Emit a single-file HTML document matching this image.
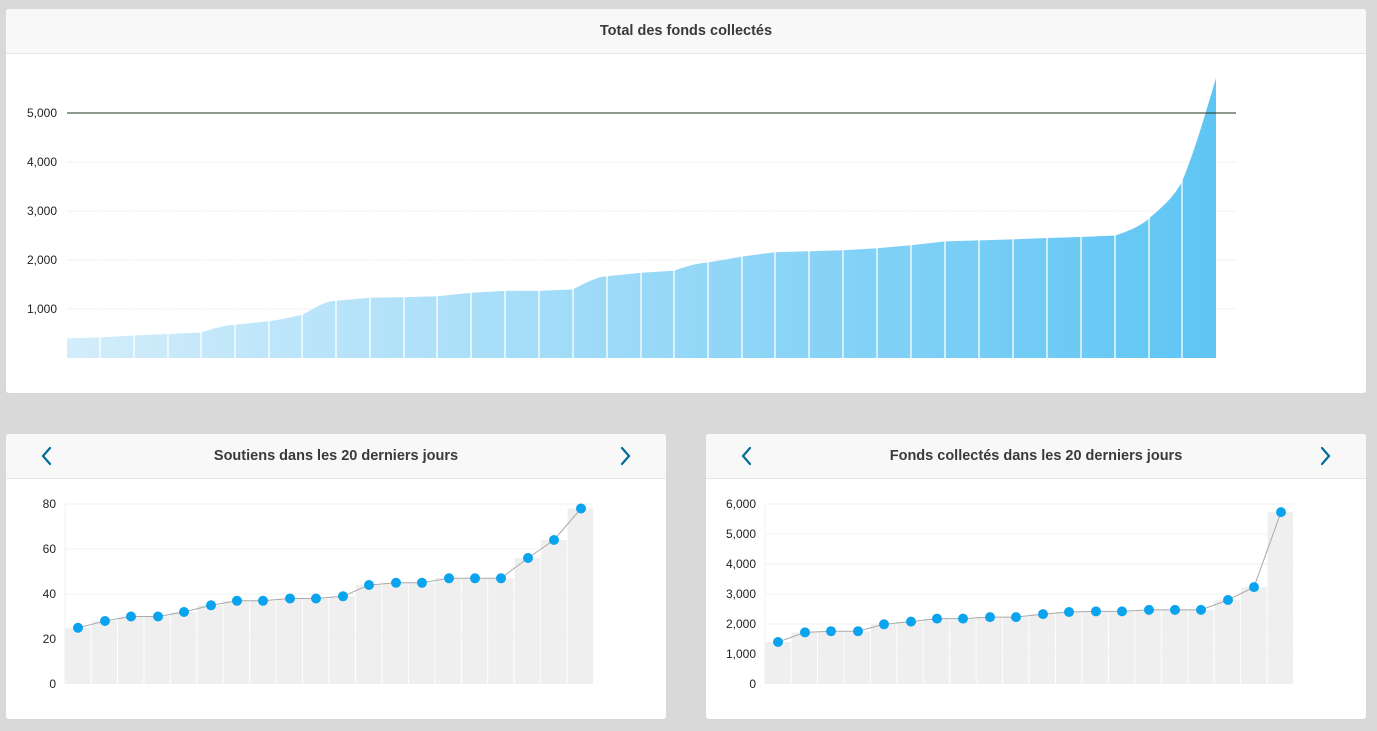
<!DOCTYPE html>
<html><head><meta charset="utf-8"><style>
body{margin:0;width:1377px;height:731px;background:#d9d9d9;font-family:"Liberation Sans",Arial,sans-serif;position:relative;overflow:hidden}
.p{position:absolute;background:#fff;border-radius:3px;overflow:hidden}
.h{height:44px;background:#f8f8f8;border-bottom:1px solid #e6e6e6;text-align:center;line-height:44px;font-weight:bold;font-size:14.5px;color:#3a3a3a}
svg{position:absolute;left:0;top:0}
text{font-family:"Liberation Sans",Arial,sans-serif;font-size:12px;fill:#222}
</style></head><body>
<div class="p" style="left:6px;top:9px;width:1360px;height:384px"><div class="h">Total des fonds collectés</div></div>
<div class="p" style="left:6px;top:434px;width:660px;height:285px"><div class="h">Soutiens dans les 20 derniers jours</div></div>
<div class="p" style="left:706px;top:434px;width:660px;height:285px"><div class="h">Fonds collectés dans les 20 derniers jours</div></div>
<svg width="1377" height="731">
<defs><linearGradient id="g" x1="0" x2="1" y1="0" y2="0"><stop offset="0" stop-color="#d3edfb"/><stop offset="1" stop-color="#5fc5f4"/></linearGradient></defs>
<g stroke="#f0f0f0"><line x1="67" x2="1236" y1="162" y2="162"/><line x1="67" x2="1236" y1="211" y2="211"/><line x1="67" x2="1236" y1="260" y2="260"/><line x1="67" x2="1236" y1="309" y2="309"/></g>
<path fill="url(#g)" d="M67,358 L67,338.4 L100,337.4 L134,335.5 L168,334 L201,332.5 C215,328 225,325 235,324.7 L269,321.3 C285,319 295,316 302,314.9 C315,308 325,301 336,300.7 L370,297.7 L404,297.2 L437,296.3 L471,292.8 L505,290.9 L539,290.9 L573,289.4 C590,280 600,276.5 607,276.2 L641,272.7 L674,270.8 C690,265 700,263 708,262.5 L742,256.6 L775,252.2 L809,251.2 L843,250.2 L877,248.2 L911,245.3 L945,241.4 L979,240.4 L1013,239.4 L1047,238 L1081,237 L1115,235.5 C1130,231 1142,225 1149,218.4 C1165,205 1175,195 1182,181.6 C1195,150 1205,115 1216,78 L1216,358 Z"/>
<g stroke="#fff" stroke-width="1.3"><path d="M100,200V358M134,200V358M168,200V358M201,200V358M235,200V358M269,200V358M302,200V358M336,200V358M370,200V358M404,200V358M437,200V358M471,200V358M505,200V358M539,200V358M573,200V358M607,200V358M641,200V358M674,200V358M708,200V358M742,200V358M775,200V358M809,200V358M843,200V358M877,200V358M911,200V358M945,200V358M979,200V358M1013,200V358M1047,200V358M1081,200V358M1115,200V358M1149,200V358M1182,150V358"/></g>
<line x1="67" x2="1236" y1="113" y2="113" stroke="#1c351c"/>
<g text-anchor="end"><text x="57" y="117">5,000</text><text x="57" y="166">4,000</text><text x="57" y="215">3,000</text><text x="57" y="264">2,000</text><text x="57" y="313">1,000</text></g>

<g stroke="#036b9a" stroke-width="2.2" fill="none" stroke-linecap="round"><path d="M50,448 L43,456 L50,464"/><path d="M622,448 L629,456 L622,464"/><path d="M750,448 L743,456 L750,464"/><path d="M1322,448 L1329,456 L1322,464"/></g>

<g stroke="#f2f2f2"><path d="M65,504H594M65,549H594M65,594H594M65,639H594M65,504V684"/><path d="M765,504H1294M765,534H1294M765,564H1294M765,594H1294M765,624H1294M765,654H1294M765,504V684"/></g>
<g fill="#efefef">
<rect x="65" y="627.8" width="25.5" height="56.2"/><rect x="91.5" y="621" width="25.5" height="63"/><rect x="118" y="616.5" width="25.5" height="67.5"/><rect x="144.4" y="616.5" width="25.5" height="67.5"/><rect x="170.8" y="612" width="25.5" height="72"/><rect x="197.3" y="605.3" width="25.5" height="78.7"/><rect x="223.7" y="600.8" width="25.5" height="83.2"/><rect x="250.2" y="600.8" width="25.5" height="83.2"/><rect x="276.6" y="598.5" width="25.5" height="85.5"/><rect x="303" y="598.5" width="25.5" height="85.5"/><rect x="329.5" y="596.3" width="25.5" height="87.7"/><rect x="356" y="585" width="25.5" height="99"/><rect x="382.4" y="582.8" width="25.5" height="101.2"/><rect x="408.9" y="582.8" width="25.5" height="101.2"/><rect x="435.3" y="578.3" width="25.5" height="105.7"/><rect x="461.8" y="578.3" width="25.5" height="105.7"/><rect x="488.2" y="578.3" width="25.5" height="105.7"/><rect x="514.7" y="558" width="25.5" height="126"/><rect x="541.1" y="540" width="25.5" height="144"/><rect x="567.6" y="508.5" width="25.5" height="175.5"/>
<rect x="765" y="642" width="25.5" height="42"/><rect x="791.5" y="632.4" width="25.5" height="51.6"/><rect x="818" y="631.2" width="25.5" height="52.8"/><rect x="844.4" y="631.2" width="25.5" height="52.8"/><rect x="870.8" y="624.3" width="25.5" height="59.7"/><rect x="897.3" y="621.6" width="25.5" height="62.4"/><rect x="923.7" y="618.6" width="25.5" height="65.4"/><rect x="950.2" y="618.6" width="25.5" height="65.4"/><rect x="976.6" y="617.1" width="25.5" height="66.9"/><rect x="1003" y="617.1" width="25.5" height="66.9"/><rect x="1029.5" y="614.1" width="25.5" height="69.9"/><rect x="1056" y="612" width="25.5" height="72"/><rect x="1082.4" y="611.4" width="25.5" height="72.6"/><rect x="1108.9" y="611.4" width="25.5" height="72.6"/><rect x="1135.3" y="609.9" width="25.5" height="74.1"/><rect x="1161.8" y="609.9" width="25.5" height="74.1"/><rect x="1188.2" y="609.9" width="25.5" height="74.1"/><rect x="1214.7" y="600" width="25.5" height="84"/><rect x="1241.1" y="587.1" width="25.5" height="96.9"/><rect x="1267.6" y="512.1" width="25.5" height="171.9"/>
</g>
<polyline fill="none" stroke="#aaa" stroke-width="1" points="78,627.8 105,621 131,616.5 158,616.5 184,612 211,605.3 237,600.8 263,600.8 290,598.5 316,598.5 343,596.3 369,585 396,582.8 422,582.8 449,578.3 475,578.3 501,578.3 528,558 554,540 581,508.5"/>
<polyline fill="none" stroke="#aaa" stroke-width="1" points="778,642 805,632.4 831,631.2 858,631.2 884,624.3 911,621.6 937,618.6 963,618.6 990,617.1 1016,617.1 1043,614.1 1069,612 1096,611.4 1122,611.4 1149,609.9 1175,609.9 1201,609.9 1228,600 1254,587.1 1281,512.1"/>
<g fill="#0aa4ee">
<circle cx="78" cy="627.8" r="5"/><circle cx="105" cy="621" r="5"/><circle cx="131" cy="616.5" r="5"/><circle cx="158" cy="616.5" r="5"/><circle cx="184" cy="612" r="5"/><circle cx="211" cy="605.3" r="5"/><circle cx="237" cy="600.8" r="5"/><circle cx="263" cy="600.8" r="5"/><circle cx="290" cy="598.5" r="5"/><circle cx="316" cy="598.5" r="5"/><circle cx="343" cy="596.3" r="5"/><circle cx="369" cy="585" r="5"/><circle cx="396" cy="582.8" r="5"/><circle cx="422" cy="582.8" r="5"/><circle cx="449" cy="578.3" r="5"/><circle cx="475" cy="578.3" r="5"/><circle cx="501" cy="578.3" r="5"/><circle cx="528" cy="558" r="5"/><circle cx="554" cy="540" r="5"/><circle cx="581" cy="508.5" r="5"/>
<circle cx="778" cy="642" r="5"/><circle cx="805" cy="632.4" r="5"/><circle cx="831" cy="631.2" r="5"/><circle cx="858" cy="631.2" r="5"/><circle cx="884" cy="624.3" r="5"/><circle cx="911" cy="621.6" r="5"/><circle cx="937" cy="618.6" r="5"/><circle cx="963" cy="618.6" r="5"/><circle cx="990" cy="617.1" r="5"/><circle cx="1016" cy="617.1" r="5"/><circle cx="1043" cy="614.1" r="5"/><circle cx="1069" cy="612" r="5"/><circle cx="1096" cy="611.4" r="5"/><circle cx="1122" cy="611.4" r="5"/><circle cx="1149" cy="609.9" r="5"/><circle cx="1175" cy="609.9" r="5"/><circle cx="1201" cy="609.9" r="5"/><circle cx="1228" cy="600" r="5"/><circle cx="1254" cy="587.1" r="5"/><circle cx="1281" cy="512.1" r="5"/>
</g>
<g text-anchor="end"><text x="56" y="508">80</text><text x="56" y="553">60</text><text x="56" y="598">40</text><text x="56" y="643">20</text><text x="56" y="688">0</text>
<text x="756" y="508">6,000</text><text x="756" y="538">5,000</text><text x="756" y="568">4,000</text><text x="756" y="598">3,000</text><text x="756" y="628">2,000</text><text x="756" y="658">1,000</text><text x="756" y="688">0</text></g>
</svg>
</body></html>
